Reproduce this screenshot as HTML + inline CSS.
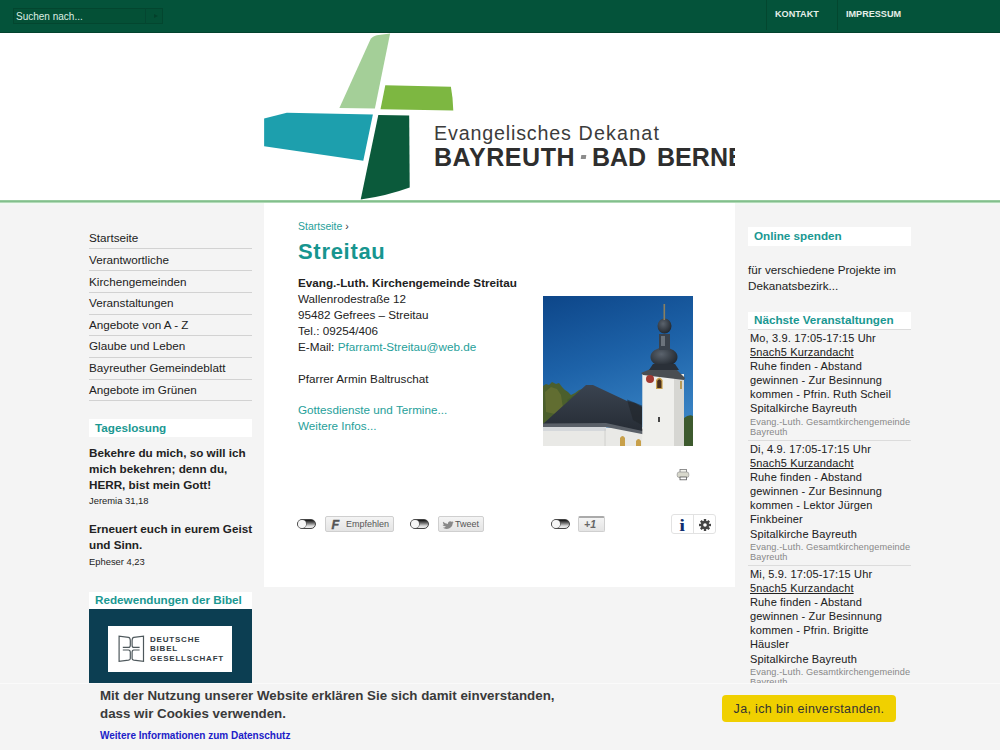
<!DOCTYPE html>
<html><head><meta charset="utf-8">
<style>
*{margin:0;padding:0;box-sizing:border-box}
html,body{width:1000px;height:750px;overflow:hidden;background:#f4f4f4;font-family:"Liberation Sans",sans-serif;color:#222}
.a{position:absolute}
#top{left:0;top:0;width:1000px;height:33px;background:#04533a;border-bottom:1px solid #03432e}
#search{left:13px;top:8px;width:150px;height:16px;background:#045036;border:1px solid #03462f}
#search span{position:absolute;left:2px;top:2px;font-size:10px;color:#dcefe4;white-space:nowrap}
#sbtn{left:145px;top:8px;width:18px;height:16px;border-left:1px solid #044631}
.sep{top:0;width:1px;height:30px;background:#03472f}
.tnav{top:8.6px;font-size:9.1px;font-weight:bold;color:#e6efe9;white-space:nowrap}
#header{left:0;top:33px;width:1000px;height:167px;background:#fff}
#gline{left:0;top:200px;width:1000px;height:3px;background:linear-gradient(#96cb9e 0,#96cb9e 33%,#82bf8c 33%,#82bf8c 67%,#b2dab8 67%)}
#content{left:264px;top:203px;width:471px;height:384px;background:#fff}
.nav{left:89px;width:163px;font-size:11.7px;color:#222;white-space:nowrap}
.navl{left:89px;width:163px;height:1px;background:#d2d2d2}
.boxh{background:#fff;color:#1a9892;font-weight:bold;font-size:11.7px;white-space:nowrap}
.t12{font-size:11.7px;line-height:15.92px;white-space:nowrap}
.link{color:#26a09a}
.ev{font-size:11px;line-height:14.1px;color:#222;white-space:nowrap;letter-spacing:0.15px;-webkit-text-stroke:0.05px #222}
.evs{font-size:9.2px;line-height:9.3px;color:#888;white-space:nowrap;letter-spacing:0.1px;padding-top:2.75px}
.tog{width:19px;height:9.5px;border-radius:5px;border:1px solid #444;background:linear-gradient(#111 0%,#666 35%,#ddd 75%,#eee 100%);}
.tog:after{content:"";position:absolute;left:0px;top:0px;width:7.5px;height:7.5px;border-radius:50%;background:#f6f6f6;box-shadow:0 0 0 0.6px #555}
.sbtn{height:16px;background:linear-gradient(#f4f4f4,#e4e4e4);border:1px solid #cfcfcf;border-radius:2px;font-size:9px;color:#555;white-space:nowrap}
.lt{color:#3c3c3c;white-space:nowrap}
.lb{font-size:25px;font-weight:bold;color:#2e2e2e;white-space:nowrap}
.evl{left:748px;width:163px;height:1px;background:#dcdcdc}
#cookie{left:0;top:683px;width:1000px;height:67px;background:#f4f4f4;border-top:1px solid #fafafa}
</style></head><body>
<div id="top" class="a"></div>
<div id="search" class="a"><span>Suchen nach...</span></div>
<div id="sbtn" class="a"></div>
<div class="a" style="left:153.5px;top:14px;width:0;height:0;border-left:4px solid #03402b;border-top:2.5px solid transparent;border-bottom:2.5px solid transparent"></div>
<div class="a sep" style="left:766px"></div>
<div class="a sep" style="left:837px"></div>
<div class="a tnav" style="left:775px">KONTAKT</div>
<div class="a tnav" style="left:846px">IMPRESSUM</div>

<div id="header" class="a"></div>
<svg class="a" style="left:0;top:0" width="1000" height="210">
  <path d="M370.3 39.7 Q372 36.5 376.8 35.2 L390.1 33.5 L374.9 108.6 L339.4 108 Z" fill="#a4cf98"/>
  <path d="M385.3 85.2 L450.9 86.8 Q453 98 453.3 110.6 L380.5 109.3 Z" fill="#7db741"/>
  <path d="M264.1 118.6 L286.8 112.7 L372.9 114.6 L363.3 160.7 L264.1 146.3 Z" fill="#1d9fad"/>
  <path d="M378.3 114.9 L409.2 115.4 L409.7 187.4 Q386 196 360.7 199.4 Z" fill="#0b5a3b"/>
</svg>
<div class="a lt" style="left:434px;top:121.5px;font-size:19.7px;letter-spacing:0.83px">Evangelisches</div>
<div class="a lt" style="left:578.5px;top:121.5px;font-size:19.7px;letter-spacing:1.17px">Dekanat</div>
<div class="a lb" style="left:434px;top:142.8px;letter-spacing:0.57px">BAYREUTH</div>
<div class="a" style="left:580.5px;top:154.6px;width:5px;height:4.3px;background:#8c8c8c;transform:skewX(-8deg)"></div>
<div class="a lb" style="left:592px;top:142.8px">BAD</div>
<div class="a" style="left:657px;top:142.8px;width:78px;height:30px;overflow:hidden"><div class="lb" style="position:absolute;left:0;top:0;letter-spacing:0.05px">BERNECK</div></div>
<div id="gline" class="a"></div>
<div class="a" style="left:0;top:203px;width:1000px;height:2px;background:linear-gradient(#f0faef,#f4f6f6)"></div>
<div id="content" class="a"></div>

<!-- left nav -->
<div class="a nav" style="top:231px">Startseite</div>
<div class="a navl" style="top:248px"></div>
<div class="a nav" style="top:253px">Verantwortliche</div>
<div class="a navl" style="top:270px"></div>
<div class="a nav" style="top:275px">Kirchengemeinden</div>
<div class="a navl" style="top:292px"></div>
<div class="a nav" style="top:296px">Veranstaltungen</div>
<div class="a navl" style="top:314px"></div>
<div class="a nav" style="top:318px">Angebote von A - Z</div>
<div class="a navl" style="top:335px"></div>
<div class="a nav" style="top:339px">Glaube und Leben</div>
<div class="a navl" style="top:357px"></div>
<div class="a nav" style="top:361px">Bayreuther Gemeindeblatt</div>
<div class="a navl" style="top:379px"></div>
<div class="a nav" style="top:383px">Angebote im Grünen</div>
<div class="a navl" style="top:400px"></div>

<div class="a boxh" style="left:89px;top:419px;width:163px;height:18px;padding:1.5px 0 0 6px">Tageslosung</div>
<div class="a t12" style="left:89px;top:445px;font-weight:bold">Bekehre du mich, so will ich<br>mich bekehren; denn du,<br>HERR, bist mein Gott!</div>
<div class="a" style="left:89px;top:495.2px;font-size:9.4px;white-space:nowrap">Jeremia 31,18</div>
<div class="a t12" style="left:89px;top:521px;font-weight:bold">Erneuert euch in eurem Geist<br>und Sinn.</div>
<div class="a" style="left:89px;top:556.2px;font-size:9.4px;white-space:nowrap">Epheser 4,23</div>

<div class="a boxh" style="left:89px;top:592px;width:163px;height:17px;padding:1px 0 0 6px">Redewendungen der Bibel</div>
<div class="a" style="left:89px;top:609px;width:163px;height:74px;background:#0c3e52"></div>
<div class="a" style="left:108px;top:626px;width:124px;height:46px;background:#fff"></div>
<svg class="a" style="left:117px;top:634px" width="28" height="29" viewBox="0 0 28 29" fill="none" stroke="#4e585c" stroke-width="1.2">
<path d="M5.8 13.4 L11.5 13.4 Q13.3 13.4 13.3 11.2 L13.3 6.8 Q13.3 3.5 11.5 3.3 L2.1 2.2 L2.1 27.3 L11.5 26.2 Q13.3 25.8 13.3 24.4 L13.3 18.3 Q13.3 16 11.5 16 L5.8 16"/>
<path d="M22.6 13.4 L16.8 13.4 Q15.1 13.4 15.1 11.2 L15.1 6.8 Q15.1 3.5 16.8 3.3 L26.5 2.2 L26.5 27.3 L16.8 26.2 Q15.1 25.8 15.1 24.4 L15.1 18.3 Q15.1 16 16.8 16 L22.6 16"/>
</svg>
<div class="a" style="left:150px;top:634.5px;font-size:8px;line-height:9.8px;font-weight:bold;color:#323b42;letter-spacing:0.8px;white-space:nowrap">DEUTSCHE<br>BIBEL<br>GESELLSCHAFT</div>


<!-- main content -->
<div class="a link" style="left:298px;top:220px;font-size:10.5px;white-space:nowrap">Startseite <span style="color:#333">›</span></div>
<div class="a" style="left:298px;top:238.5px;font-size:22px;letter-spacing:0.7px;font-weight:bold;color:#17958f;white-space:nowrap">Streitau</div>
<div class="a t12" style="left:298px;top:275px"><b>Evang.-Luth. Kirchengemeinde Streitau</b><br>Wallenrodestraße 12<br>95482 Gefrees – Streitau<br>Tel.: 09254/406<br>E-Mail: <span class="link">Pfarramt-Streitau@web.de</span><br><br>Pfarrer Armin Baltruschat<br><br><span class="link">Gottesdienste und Termine...</span><br><span class="link">Weitere Infos...</span></div>
<svg class="a" style="left:543px;top:296px" width="150" height="150" viewBox="0 0 150 150">
<defs>
<linearGradient id="sky" x1="0" y1="0" x2="0.3" y2="1"><stop offset="0" stop-color="#0d4689"/><stop offset="0.5" stop-color="#1d62a8"/><stop offset="1" stop-color="#3883c4"/></linearGradient>
<linearGradient id="roof" x1="0" y1="0" x2="0" y2="1"><stop offset="0" stop-color="#3a4350"/><stop offset="1" stop-color="#252b33"/></linearGradient>
<radialGradient id="dome" cx="0.4" cy="0.35" r="0.7"><stop offset="0" stop-color="#5b636d"/><stop offset="1" stop-color="#1f252c"/></radialGradient>
</defs>
<rect width="150" height="150" fill="url(#sky)"/>
<path d="M0 90 L3 88 L6 89 L9 86 L13 88 L16 87 L19 91 L22 94 L25 96 L28 99 L32 97 L36 94 L40 93 L42 95 L44 126 L0 128 Z" fill="#4b5f2c"/>
<path d="M2 96 L8 91 L14 93 L18 99 L20 112 L12 118 L3 116 Z" fill="#7d7f38" opacity="0.45"/>
<path d="M24 104 L30 100 L36 102 L38 112 L28 116 Z" fill="#3f5a2a" opacity="0.8"/>
<path d="M141 122 Q146 118 150 120 L150 150 L141 150 Z" fill="#3d5a2e"/>
<rect x="0" y="131.5" width="104" height="18.5" fill="#e9e9e6"/>
<polygon points="0,128 43,89 50,89 84,105 92,107 99,111 99,132 104,138 66,130 0,130" fill="url(#roof)"/>
<polygon points="84,103.5 99,109.5 99,129 90,124" fill="#1f242a" opacity="0.6"/>
<polygon points="0,127.5 63,127 104,136 104,139 63,131 0,131" fill="#5a6068"/>
<rect x="0" y="131" width="63" height="4" fill="#d5d8db"/>
<line x1="62" y1="133" x2="62" y2="150" stroke="#c9c9c6" stroke-width="0.8"/>
<path d="M77 150 L77 142 Q79.5 138 82 142 L82 150 Z" fill="#c8a04a"/>
<path d="M93 150 L93 145 Q95.5 141 98 145 L98 150 Z" fill="#c8a04a"/>
<rect x="99.3" y="78" width="41.7" height="72" fill="#efefec"/>
<rect x="131" y="80" width="10" height="70" fill="#d6d6d2"/>
<polygon points="98,77 110,72 132,72 142,82 141,84 100,79" fill="#4a4e52"/>
<ellipse cx="121" cy="61" rx="13.5" ry="9.5" fill="url(#dome)"/>
<polygon points="110,68 132,68 136,74 106,74" fill="#2a3038"/>
<rect x="116" y="38" width="11" height="16" fill="#3a424c"/>
<rect x="118" y="40" width="4" height="10" fill="#6b737c"/>
<ellipse cx="121.5" cy="30" rx="7" ry="7.5" fill="url(#dome)"/>
<rect x="120.5" y="8" width="1.6" height="16" fill="#8a8060"/>
<circle cx="107" cy="83" r="4" fill="#a23a32"/>
<path d="M113 93 L113 84 Q116.3 79 119.6 84 L119.6 93 Z" fill="#c9a14e"/>
<path d="M114.2 92 L114.2 85 Q116.3 81.5 118.4 85 L118.4 92 Z" fill="#4a3020"/>
<rect x="115" y="121" width="2" height="5" fill="#444"/>
<rect x="137" y="85" width="2" height="8" fill="#b89b58"/>
</svg>
<svg class="a" style="left:676px;top:468px" width="14" height="13" viewBox="0 0 14 13">
<rect x="4" y="1.5" width="6.5" height="3" fill="#f4f4ee" stroke="#777" stroke-width="0.8"/>
<rect x="1.2" y="4" width="11.6" height="5.5" rx="2" fill="#d8d8cc" stroke="#888" stroke-width="0.6"/>
<rect x="4" y="9" width="6.5" height="2.8" fill="#fff" stroke="#555" stroke-width="0.8"/>
</svg>

<div class="a tog" style="left:297px;top:519px"></div>
<div class="a sbtn" style="left:325px;top:516px;width:69px"><i style="position:absolute;left:5.5px;top:0.5px;font-size:12.5px;font-weight:bold;color:#555;font-family:'Liberation Sans',sans-serif;-webkit-text-stroke:0.4px #555">F</i><span style="position:absolute;left:20px;top:2px">Empfehlen</span></div>
<div class="a tog" style="left:410px;top:519px"></div>
<div class="a sbtn" style="left:438px;top:516px;width:46px"><svg style="position:absolute;left:3px;top:4px" width="12" height="9" viewBox="0 0 12 9"><path d="M0.5 4 Q2 5.5 4 5.2 Q2.5 6.8 0.8 6.8 Q4 9 8 7 Q11 5 10.8 2 L11.8 1 L10.6 1.2 L11.2 0.3 Q10 0.8 9.5 0.8 Q8 -0.3 6.5 1 Q5.8 2 6 3 Q3 2.8 1 0.8 Q0.5 2.5 2 3.6 Z" fill="#888"/></svg><span style="position:absolute;left:16px;top:2px">Tweet</span></div>
<div class="a tog" style="left:551px;top:519px"></div>
<div class="a sbtn" style="left:578px;top:516px;width:27px;border-top:2px solid #aaa"><span style="position:absolute;left:5px;top:0px;font-weight:bold;font-style:italic;color:#666;font-size:10.5px">+1</span></div>
<div class="a" style="left:671px;top:514px;width:45px;height:20px;border:1px solid #e2e2e2;border-radius:3px;background:#fff"></div>
<div class="a" style="left:693px;top:515px;width:1px;height:18px;background:#e2e2e2"></div>
<div class="a" style="left:679.5px;top:516px;font-family:'Liberation Serif',serif;font-weight:bold;font-size:16px;line-height:20px;color:#0f2c6e;transform:scaleX(1.3)">i</div>
<svg class="a" style="left:697.5px;top:517.5px" width="14" height="14" viewBox="0 0 14 14"><g fill="#444"><circle cx="7" cy="7" r="4.2"/><g stroke="#444" stroke-width="2.4"><line x1="7" y1="1" x2="7" y2="13"/><line x1="1" y1="7" x2="13" y2="7"/><line x1="2.8" y1="2.8" x2="11.2" y2="11.2"/><line x1="11.2" y1="2.8" x2="2.8" y2="11.2"/></g></g><circle cx="7" cy="7" r="1.8" fill="#fff"/></svg>


<!-- right sidebar -->
<div class="a boxh" style="left:748px;top:227px;width:163px;height:19px;padding:2px 0 0 6px">Online spenden</div>
<div class="a t12" style="left:748px;top:262px">für verschiedene Projekte im<br>Dekanatsbezirk...</div>
<div class="a boxh" style="left:748px;top:312px;width:163px;height:17px;padding:0.5px 0 0 6px">Nächste Veranstaltungen</div>
<div class="a evl" style="top:329px"></div>


<div class="a" style="left:750px;top:331px;width:170px">
<div class="ev">Mo, 3.9. 17:05-17:15 Uhr<br><u>5nach5 Kurzandacht</u><br>Ruhe finden - Abstand<br>gewinnen - Zur Besinnung<br>kommen - Pfrin. Ruth Scheil<br>Spitalkirche Bayreuth</div>
<div class="evs">Evang.-Luth. Gesamtkirchengemeinde<br>Bayreuth</div>
</div>
<div class="a evl" style="top:440px"></div>
<div class="a" style="left:750px;top:442px;width:170px">
<div class="ev">Di, 4.9. 17:05-17:15 Uhr<br><u>5nach5 Kurzandacht</u><br>Ruhe finden - Abstand<br>gewinnen - Zur Besinnung<br>kommen - Lektor Jürgen<br>Finkbeiner<br>Spitalkirche Bayreuth</div>
<div class="evs">Evang.-Luth. Gesamtkirchengemeinde<br>Bayreuth</div>
</div>
<div class="a evl" style="top:565px"></div>
<div class="a" style="left:750px;top:567px;width:170px">
<div class="ev">Mi, 5.9. 17:05-17:15 Uhr<br><u>5nach5 Kurzandacht</u><br>Ruhe finden - Abstand<br>gewinnen - Zur Besinnung<br>kommen - Pfrin. Brigitte<br>Häusler<br>Spitalkirche Bayreuth</div>
<div class="evs">Evang.-Luth. Gesamtkirchengemeinde<br>Bayreuth</div>
</div>
<div id="cookie" class="a"></div>
<div class="a" style="left:100px;top:686.7px;font-size:13.33px;line-height:18.2px;font-weight:bold;color:#3a3a3a;white-space:nowrap">Mit der Nutzung unserer Website erklären Sie sich damit einverstanden,<br>dass wir Cookies verwenden.</div>
<div class="a" style="left:100px;top:729.5px;font-size:10px;font-weight:bold;color:#2020c8;white-space:nowrap">Weitere Informationen zum Datenschutz</div>
<div class="a" style="left:722px;top:695px;width:174px;height:27px;background:#f0d000;border-radius:4px;font-size:12.5px;letter-spacing:0.35px;padding-top:1px;color:#333;text-align:center;line-height:27px;white-space:nowrap">Ja, ich bin einverstanden.</div>
</body></html>
